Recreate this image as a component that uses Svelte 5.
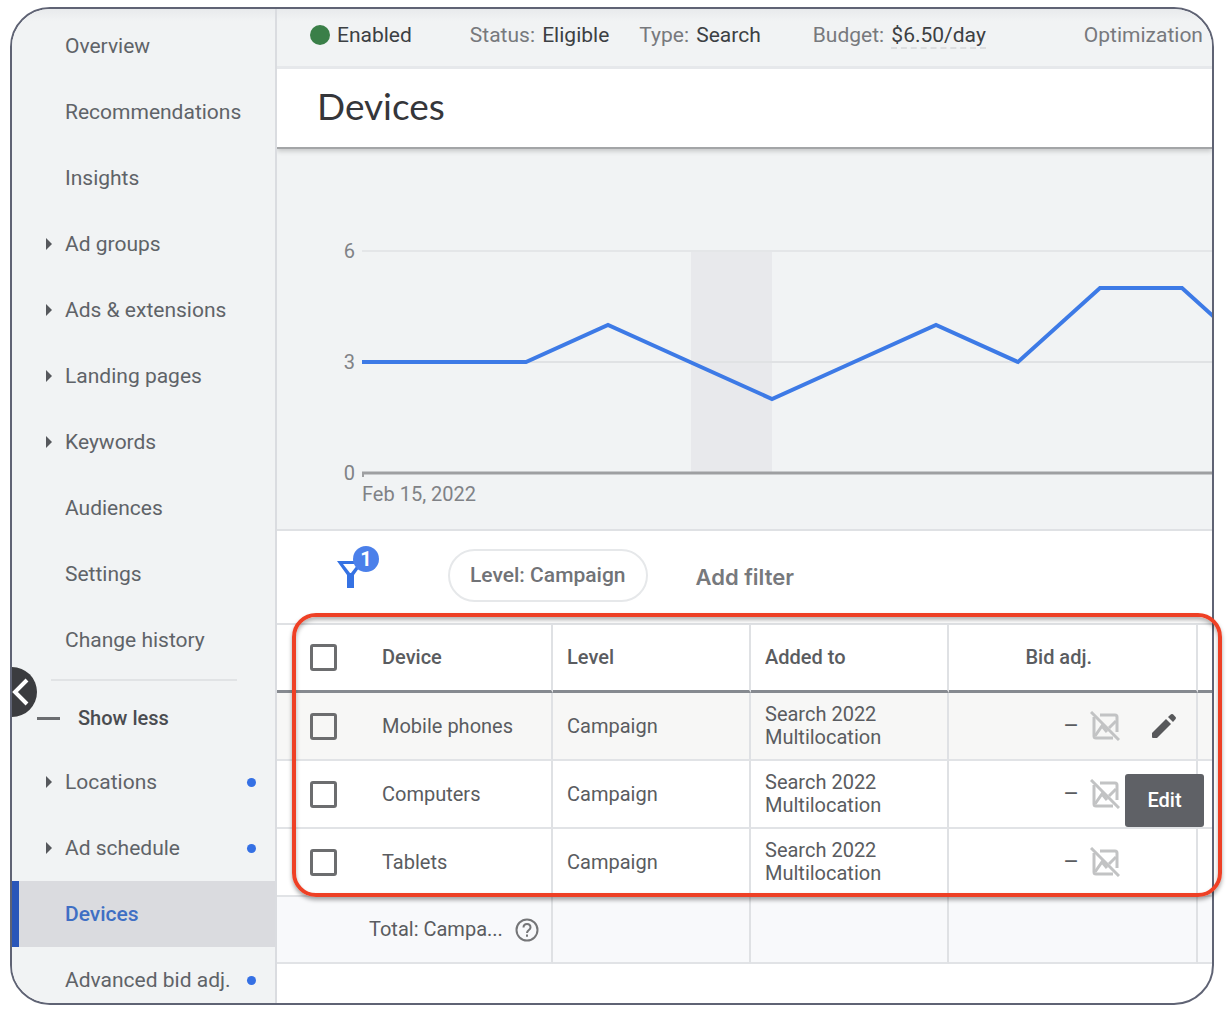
<script>
  let activeNav = $state('Devices');

  const mainNav = [
    { label: 'Overview' },
    { label: 'Recommendations' },
    { label: 'Insights' },
    { label: 'Ad groups', caret: true },
    { label: 'Ads & extensions', caret: true },
    { label: 'Landing pages', caret: true },
    { label: 'Keywords', caret: true },
    { label: 'Audiences' },
    { label: 'Settings' },
    { label: 'Change history' }
  ];

  const moreNav = [
    { label: 'Locations', caret: true, dot: true },
    { label: 'Ad schedule', caret: true, dot: true },
    { label: 'Devices' },
    { label: 'Advanced bid adj.', dot: true }
  ];

  const rows = [
    { device: 'Mobile phones', level: 'Campaign', addedTo: 'Search 2022 Multilocation', hovered: true },
    { device: 'Computers', level: 'Campaign', addedTo: 'Search 2022 Multilocation' },
    { device: 'Tablets', level: 'Campaign', addedTo: 'Search 2022 Multilocation' }
  ];

  const values = [3, 3, 3, 4, 3, 2, 3, 4, 3, 5, 5, 3];
  const plotLeft = 85;
  const step = 82;
  const y = (v) => 324 - v * 37;
  const points = values.map((v, i) => `${plotLeft + i * step},${y(v)}`).join(' ');
</script>

{#snippet navItem(item)}
  <li>
    <a
      href="#{item.label}"
      class="nav-item"
      class:active={item.label === activeNav}
      onclick={() => (activeNav = item.label)}
    >
      <span class="caret-slot">{#if item.caret}<span class="caret"></span>{/if}</span>
      <span class="nav-label">{item.label}</span>
      {#if item.dot}<span class="dot"></span>{/if}
    </a>
  </li>
{/snippet}

<div class="page">
  <div class="frame">
    <aside class="sidebar">
      <nav>
        <ul>
          {#each mainNav as item}{@render navItem(item)}{/each}
        </ul>
        <hr />
        <button class="show-less"><span class="minus"></span>Show less</button>
        <ul>
          {#each moreNav as item}{@render navItem(item)}{/each}
        </ul>
      </nav>
      <button class="collapse" aria-label="Collapse menu">
        <svg width="50" height="50" viewBox="0 0 50 50">
          <path d="M40 13 L28 25 L40 37" fill="none" stroke="#fff" stroke-width="4" />
        </svg>
      </button>
    </aside>

    <main>
      <div class="status-bar">
        <span class="enabled"><span class="green"></span>Enabled</span>
        <span class="status">Status: <b>Eligible</b></span>
        <span class="type">Type: <b>Search</b></span>
        <span class="budget">Budget: <b class="dashed">$6.50/day</b></span>
        <span class="optimization">Optimization</span>
      </div>

      <header><h1>Devices</h1></header>

      <section class="chart" aria-label="Performance chart">
        <svg width="100%" height="380">
          <rect x={plotLeft + 4 * step + 1} y={y(6)} width={step - 1} height="222" fill="#e8e9ec" />
          <line x1={plotLeft} x2="100%" y1={y(6)} y2={y(6)} stroke="#e4e6e8" stroke-width="2" />
          <line x1={plotLeft} x2="100%" y1={y(3)} y2={y(3)} stroke="#e0e2e4" stroke-width="2" />
          <path d="M86 328 V324" stroke="#9e9fa1" stroke-width="2" />
          <line x1={plotLeft} x2="100%" y1={y(0)} y2={y(0)} stroke="#9e9fa1" stroke-width="3" />
          <polyline {points} fill="none" stroke="#3d7ae6" stroke-width="4" />
          <text x="78" y={y(6) + 7} text-anchor="end">6</text>
          <text x="78" y={y(3) + 7} text-anchor="end">3</text>
          <text x="78" y={y(0) + 7} text-anchor="end">0</text>
          <text x={plotLeft} y="352">Feb 15, 2022</text>
        </svg>
      </section>

      <div class="filters">
        <button class="funnel" aria-label="Filters, 1 active">
          <svg width="44" height="60" viewBox="0 0 44 60">
            <path fill-rule="evenodd" d="M0 16 H27 L17 30 V43 H10 V30 Z M6 19 L13 28 H14 L21 19 Z" fill="#3572e3" />
            <circle cx="29" cy="14" r="13" fill="#4b80ea" />
            <text x="29" y="21" text-anchor="middle">1</text>
          </svg>
        </button>
        <button class="chip">Level: Campaign</button>
        <button class="add-filter">Add filter</button>
      </div>

      <table>
        <colgroup>
          <col class="c-check" /><col class="c-device" /><col class="c-text" /><col class="c-text" /><col class="c-bid" /><col />
        </colgroup>
        <thead>
          <tr>
            <th class="check"><input type="checkbox" aria-label="Select all" /></th>
            <th class="device">Device</th>
            <th>Level</th>
            <th>Added to</th>
            <th class="bid-head">Bid adj.</th>
            <th class="rest"></th>
          </tr>
        </thead>
        <tbody>
          {#each rows as row}
            <tr class:hovered={row.hovered}>
              <td class="check"><input type="checkbox" aria-label="Select {row.device}" /></td>
              <td class="device">{row.device}</td>
              <td>{row.level}</td>
              <td class="added">{row.addedTo}</td>
              <td class="bid">
                <div class="bid-content">
                  <span class="dash">–</span>
                  <svg class="no-chart" width="30" height="30" viewBox="0 0 30 30" fill="none" stroke="#c2c3c4" stroke-width="3">
                    <path d="M1 1 L29 29" />
                    <path d="M10 4 H25 Q27 4 27 6 V21" />
                    <path d="M4 6 V25 Q4 27 6 27 H23" />
                    <path d="M5 25 L12 15 L17 21" />
                    <path d="M19 17 L26 10" />
                  </svg>
                  <span class="edit-slot">
                    {#if row.hovered}
                      <button class="edit" aria-label="Edit bid adjustment">
                        <svg width="26" height="26" viewBox="0 0 26 26" fill="#58595b">
                          <path d="M1 20 L15 6 L20 11 L6 25 H2 Q1 25 1 24 Z" />
                          <path d="M17 4 L20 1.3 Q21 .6 22 1.3 L24.6 4 Q25.4 5 24.6 6 L22 9 Z" />
                        </svg>
                      </button>
                      <span class="tooltip" role="tooltip">Edit</span>
                    {/if}
                  </span>
                </div>
              </td>
              <td class="rest"></td>
            </tr>
          {/each}
        </tbody>
        <tfoot>
          <tr>
            <td colspan="2" class="total">
              <div class="total-content">
                <span>Total: Campa...</span>
                <button class="help" aria-label="Help">
                  <svg width="24" height="24" viewBox="0 0 24 24" fill="none" stroke="#757678" stroke-width="2">
                    <circle cx="12" cy="12" r="10.5" />
                    <path d="M8.5 9.5 C8.5 4.8 15.5 4.8 15.5 9.5 C15.5 12 12 12 12 15" />
                    <path d="M12 16.5 V18.8" />
                  </svg>
                </button>
              </div>
            </td>
            <td></td>
            <td></td>
            <td></td>
            <td class="rest"></td>
          </tr>
        </tfoot>
      </table>
    </main>
  </div>
  <div class="highlight"></div>
</div>

<style>
  :global(body) {
    background: #fff;
  }
  .page {
    position: relative;
    box-sizing: border-box;
    height: 100vh;
    padding: 7px 14px 9px 10px;
    overflow: hidden;
    font: 21px/24px Roboto, 'Liberation Sans', sans-serif;
    color: #5f6368;
  }
  .frame {
    box-sizing: border-box;
    height: 100%;
    display: flex;
    overflow: hidden;
    border: 2px solid #5f6374;
    border-radius: 40px;
    background: #fff;
  }
  button {
    font: inherit;
    color: inherit;
    border: 0;
    padding: 0;
    background: none;
    cursor: pointer;
  }
  svg {
    display: block;
  }

  .sidebar {
    position: relative;
    flex: none;
    box-sizing: border-box;
    width: 265px;
    padding-top: 4px;
    border-right: 2px solid #dadce0;
    background: linear-gradient(#e8eaec, #f1f3f4 12px);
  }
  ul {
    list-style: none;
    margin: 0;
    padding: 0;
  }
  .nav-item {
    display: flex;
    align-items: center;
    box-sizing: border-box;
    height: 66px;
    padding: 0 19px 0 33px;
    color: inherit;
    text-decoration: none;
    white-space: nowrap;
  }
  .nav-item.active {
    padding-left: 26px;
    border-left: 7px solid #2a56b9;
    background: #dadbdf;
    color: #3f6fc4;
    font-weight: 500;
  }
  .caret-slot {
    flex: none;
    width: 20px;
  }
  .caret {
    display: block;
    width: 0;
    margin-left: 1px;
    border: 6px solid transparent;
    border-left: 6px solid #56585c;
    border-right: 0;
  }
  .dot {
    width: 9px;
    height: 9px;
    margin-left: auto;
    border-radius: 50%;
    background: #3570e4;
  }
  hr {
    height: 2px;
    margin: 6px 38px 6px 39px;
    border: 0;
    background: #e1e3e5;
  }
  .show-less {
    display: flex;
    align-items: center;
    gap: 18px;
    height: 62px;
    padding-left: 25px;
    color: #4a4c50;
    font-size: 20px;
    font-weight: 500;
  }
  .minus {
    width: 23px;
    height: 3px;
    background: #6b6d70;
  }
  .collapse {
    position: absolute;
    top: 658px;
    left: -25px;
    border-radius: 50%;
    background: #3b3c3f;
  }

  main {
    flex: 1;
    min-width: 0;
  }
  .status-bar {
    display: flex;
    align-items: center;
    height: 51px;
    padding: 0 0 6px 33px;
    border-bottom: 3px solid #e6e8eb;
    background: linear-gradient(#e8eaec, #f1f3f4 12px);
    color: #77797d;
    white-space: nowrap;
  }
  .status-bar b,
  .enabled {
    color: #3c4043;
    font-weight: 400;
  }
  .status-bar b {
    margin-left: 2px;
  }
  .enabled {
    display: flex;
    align-items: center;
    gap: 7px;
  }
  .green {
    width: 20px;
    height: 20px;
    border-radius: 50%;
    background: #3a7f48;
  }
  .status {
    margin-left: 58px;
  }
  .type {
    margin-left: 30px;
  }
  .budget {
    margin-left: 52px;
  }
  .optimization {
    margin-left: 98px;
  }
  .status-bar .dashed {
    border-bottom: 2px dashed #dcdee0;
  }
  header {
    position: relative;
    padding: 15px 40px 19px;
    border-bottom: 2px solid #a3a5a7;
    box-shadow: 0 2px 5px rgba(0, 0, 0, 0.2);
    clip-path: inset(0 0 -10px 0);
    background: #fff;
  }
  h1 {
    margin: 0;
    font: 400 37px/44px Lato, Inter, sans-serif;
    color: #35363a;
  }
  .chart {
    border-bottom: 2px solid #dfe1e4;
    background: #f1f3f4;
  }
  .chart text {
    font-size: 20px;
    fill: #808286;
  }

  .filters {
    display: flex;
    align-items: center;
    height: 88px;
    padding: 0 20px 4px 60px;
    font-weight: 500;
    white-space: nowrap;
  }
  .funnel text {
    font: 700 20px Roboto, sans-serif;
    fill: #fff;
  }
  .chip {
    height: 53px;
    margin: 0 48px 0 67px;
    padding: 0 20px;
    border: 2px solid #e6e8ea;
    border-radius: 27px;
    color: #717377;
  }
  .add-filter {
    padding-top: 4px;
    font-family: Inter, sans-serif;
    font-size: 22px;
    font-weight: 600;
    color: #77797d;
  }

  table {
    width: 100%;
    table-layout: fixed;
    border-spacing: 0;
    font-size: 20px;
    line-height: 23px;
    color: #5a5c60;
  }
  .c-check {
    width: 105px;
  }
  .c-device {
    width: 171px;
  }
  .c-text {
    width: 198px;
  }
  .c-bid {
    width: 249px;
  }
  th,
  td {
    box-sizing: border-box;
    height: 67px;
    padding: 0 20px 0 14px;
    border-right: 2px solid #dfe1e4;
    border-bottom: 2px solid #e1e3e6;
    text-align: left;
    font-weight: 400;
  }
  th {
    height: 70px;
    border-top: 2px solid #dfe1e4;
    border-bottom: 3px solid #868a90;
    font-weight: 500;
  }
  tbody td {
    height: 68px;
  }
  .check {
    padding: 0 0 0 33px;
    border-right: 0;
  }
  .device {
    padding-left: 0;
  }
  .rest {
    padding: 0;
    border-right: 0;
  }
  th.bid-head {
    padding-right: 104px;
    text-align: right;
  }
  input[type='checkbox'] {
    appearance: none;
    display: block;
    width: 27px;
    height: 27px;
    margin: 0;
    border: 3px solid #6c6d6f;
    border-radius: 3px;
  }
  .hovered td {
    background: #f7f7f6;
  }
  td.bid {
    padding-right: 19px;
  }
  .bid-content {
    display: flex;
    align-items: center;
    justify-content: flex-end;
  }
  .dash {
    font-size: 24px;
  }
  .no-chart {
    margin: 0 31px 0 11px;
  }
  .edit-slot {
    position: relative;
    width: 26px;
  }
  .edit {
    display: block;
  }
  .tooltip {
    position: absolute;
    z-index: 1;
    top: 61px;
    left: -26px;
    width: 79px;
    border-radius: 3px;
    background: #5f6166;
    color: #fff;
    font-weight: 500;
    line-height: 53px;
    text-align: center;
  }
  tfoot td {
    background: #f8f9fb;
  }
  td.total {
    padding: 0 12px 0 92px;
  }
  .total-content {
    display: flex;
    align-items: center;
    justify-content: space-between;
    white-space: nowrap;
  }

  .highlight {
    position: absolute;
    top: 613px;
    left: 292px;
    right: 6px;
    height: 276px;
    border: 4px solid #ee4025;
    border-radius: 24px;
    box-shadow: 0 3px 4px rgba(0, 0, 0, 0.35), inset 0 3px 4px rgba(0, 0, 0, 0.3);
    pointer-events: none;
  }
</style>
